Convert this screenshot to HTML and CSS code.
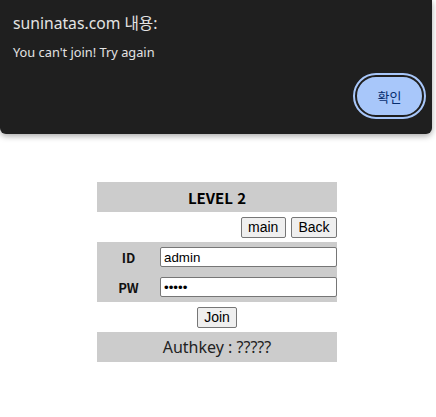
FILE: index.html
```html
<!DOCTYPE html>
<html lang="ko">
<head>
<meta charset="utf-8">
<title>LEVEL 2</title>
<link rel="stylesheet" href="styles.css">
</head>
<body>
<div class="page">
  <div class="panel">
    <div class="row grey title">LEVEL 2</div>
    <div class="row nav">
      <button class="btn">main</button>
      <button class="btn">Back</button>
    </div>
    <div class="grey fields">
      <div class="field">
        <span class="label">ID</span>
        <input class="inp" type="text" value="admin">
      </div>
      <div class="field">
        <span class="label">PW</span>
        <input class="inp" type="password" value="12345">
      </div>
    </div>
    <div class="row center">
      <button class="btn">Join</button>
    </div>
    <div class="row grey auth">Authkey : ?????</div>
  </div>
</div>

<div class="dialog">
  <div class="dlg-title">suninatas.com 내용:</div>
  <div class="dlg-msg">You can't join! Try again</div>
  <div class="dlg-actions">
    <button class="ok">확인</button>
  </div>
</div>
</body>
</html>
```
FILE: styles.css
```css
html, body {
  background: #ffffff;
}
body {
  margin: 8px 10px 8px 8px;
  font-family: "Noto Sans CJK KR", "Noto Sans", sans-serif;
}
.page {
  padding-top: 174px;
}
.panel {
  width: 240px;
  margin: 0 auto;
}
.row {
  height: 30px;
  display: flex;
  align-items: center;
}
.grey {
  background: #cccccc;
}
.title {
  justify-content: center;
  font-weight: bold;
  font-size: 15px;
  color: #000;
}
.nav {
  justify-content: flex-end;
  gap: 5px;
}
.center {
  justify-content: center;
}
.btn {
  box-sizing: border-box;
  font-family: "Liberation Sans", Arial, sans-serif;
  font-size: 14px;
  height: 21px;
  padding: 0 6.5px;
  line-height: 16px;
  background: #efefef;
  color: #000;
  border: 1px solid #767676;
  border-radius: 2px;
  margin: 0;
}
.fields {
  display: flex;
  flex-direction: column;
}
.field {
  height: 30px;
  display: flex;
  align-items: center;
}
.label {
  width: 63px;
  text-align: center;
  font-weight: bold;
  font-size: 13px;
  color: #111;
}
.inp {
  box-sizing: border-box;
  width: 177px;
  height: 20px;
  margin: 0;
  padding: 0 3px;
  border: 1px solid #767676;
  border-radius: 2px;
  font-family: "Liberation Sans", Arial, sans-serif;
  font-size: 13.33px;
  color: #000;
  background: #fff;
}
.auth {
  justify-content: center;
  font-family: "Noto Sans", "Noto Sans CJK KR", sans-serif;
  font-size: 16px;
  color: #222;
}

.dialog {
  position: absolute;
  left: 0;
  top: 0;
  width: 432px;
  height: 134px;
  box-sizing: border-box;
  background: #1f1f1f;
  border-radius: 0 0 6px 6px;
  box-shadow: 0 2px 6px rgba(0,0,0,0.35);
  padding: 12px 13px 0 13px;
  font-family: "Noto Sans", "Noto Sans CJK KR", sans-serif;
  color: #e3e3e3;
}
.dlg-title {
  font-size: 15.7px;
  line-height: 22px;
}
.dlg-msg {
  margin-top: 9px;
  font-size: 12.8px;
  line-height: 18px;
}
.dlg-actions {
  display: flex;
  justify-content: flex-end;
  margin-top: 14px;
  margin-right: -5px;
}
.ok {
  box-sizing: border-box;
  width: 69px;
  height: 42px;
  border-radius: 21px;
  background: #a8c7fa;
  color: #062e6f;
  border: 2px solid #1f1f1f;
  outline: 2px solid #a8c7fa;
  outline-offset: 0;
  font-family: "Noto Sans CJK KR", sans-serif;
  font-size: 13px;
  margin: 0;
}
```
